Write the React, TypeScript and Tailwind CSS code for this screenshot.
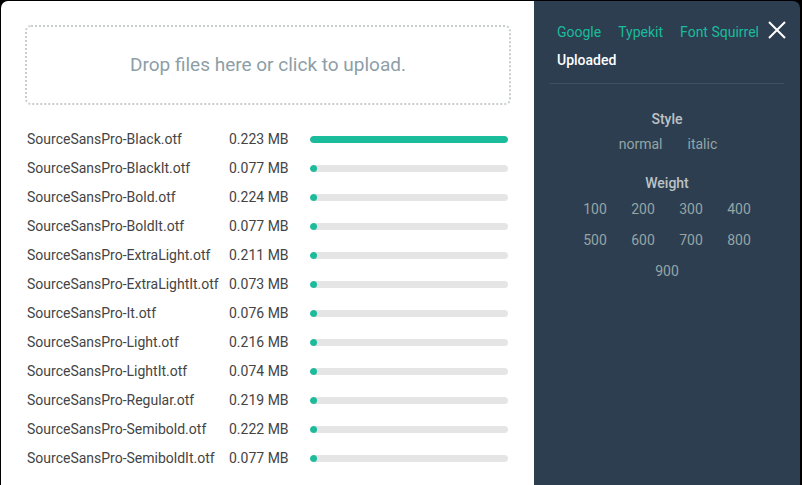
import React from "react";

const files: [string, string, number][] = [
  ["SourceSansPro-Black.otf", "0.223 MB", 100],
  ["SourceSansPro-BlackIt.otf", "0.077 MB", 0],
  ["SourceSansPro-Bold.otf", "0.224 MB", 0],
  ["SourceSansPro-BoldIt.otf", "0.077 MB", 0],
  ["SourceSansPro-ExtraLight.otf", "0.211 MB", 0],
  ["SourceSansPro-ExtraLightIt.otf", "0.073 MB", 0],
  ["SourceSansPro-It.otf", "0.076 MB", 0],
  ["SourceSansPro-Light.otf", "0.216 MB", 0],
  ["SourceSansPro-LightIt.otf", "0.074 MB", 0],
  ["SourceSansPro-Regular.otf", "0.219 MB", 0],
  ["SourceSansPro-Semibold.otf", "0.222 MB", 0],
  ["SourceSansPro-SemiboldIt.otf", "0.077 MB", 0],
];

const weights = ["100", "200", "300", "400", "500", "600", "700", "800"];

export default function App() {
  return (
    <div className="min-h-screen h-[485px] overflow-hidden bg-black pl-px pt-px font-['Roboto',sans-serif]">
      <div className="flex h-[520px] w-[799px] overflow-hidden rounded-t-[7px]">
        {/* Upload side */}
        <div className="w-[533px] bg-white px-6 pt-6">
          <div className="flex h-[80px] w-[486px] items-center justify-center rounded-md border-2 border-dotted border-[#c8cdd0] text-[19px] text-[#8d9ea7]">
            Drop files here or click to upload.
          </div>
          <div className="mt-5">
            {files.map(([name, size, pct]) => (
              <div key={name} className="flex h-[29px] items-center text-[14px] text-[#444]">
                <div className="w-[204px] pl-[2px]">{name}</div>
                <div className="w-[81px]">{size}</div>
                <div className="h-[7px] w-[198px] overflow-hidden rounded-full bg-[#e5e5e5]">
                  <div
                    className="h-full min-w-[7px] rounded-full bg-[#1abc9c]"
                    style={{ width: `${pct}%` }}
                  />
                </div>
              </div>
            ))}
          </div>
        </div>

        {/* Source side */}
        <div className="flex-1 bg-[#2c3e50] px-4 pt-[21px]">
          <div className="flex items-start">
            <div className="flex flex-1 gap-[17px] pl-[7px] text-[14px] text-[#1abc9c]">
              <span>Google</span>
              <span>Typekit</span>
              <span>Font Squirrel</span>
            </div>
            <svg className="mt-[-2px] mr-[-3px] h-[20px] w-[20px]" viewBox="0 0 20 20" fill="none" stroke="white" strokeWidth="2">
              <path d="M2 2L18 18M18 2L2 18" />
            </svg>
          </div>
          <div className="mt-[7px] pl-[7px] text-[14px] font-medium text-white">Uploaded</div>
          <div className="mt-[12px] h-px bg-[#3f5164]" />

          <div className="mt-[25px] text-center text-[14px] font-medium text-[#bdc3c7]">Style</div>
          <div className="mt-[4px] flex justify-center gap-[25px] pl-[2px] text-[14px] text-[#95a5a6]">
            <span>normal</span>
            <span>italic</span>
          </div>

          <div className="mt-[18px] text-center text-[14px] font-medium text-[#bdc3c7]">Weight</div>
          <div className="mx-auto mt-[5px] grid w-[192px] grid-cols-4 gap-y-[10px] text-center text-[14px] text-[#95a5a6]">
            {weights.map((w) => (
              <span key={w} className="leading-[21px]">{w}</span>
            ))}
          </div>
          <div className="mt-[10px] text-center text-[14px] leading-[21px] text-[#95a5a6]">900</div>
        </div>
      </div>
    </div>
  );
}
